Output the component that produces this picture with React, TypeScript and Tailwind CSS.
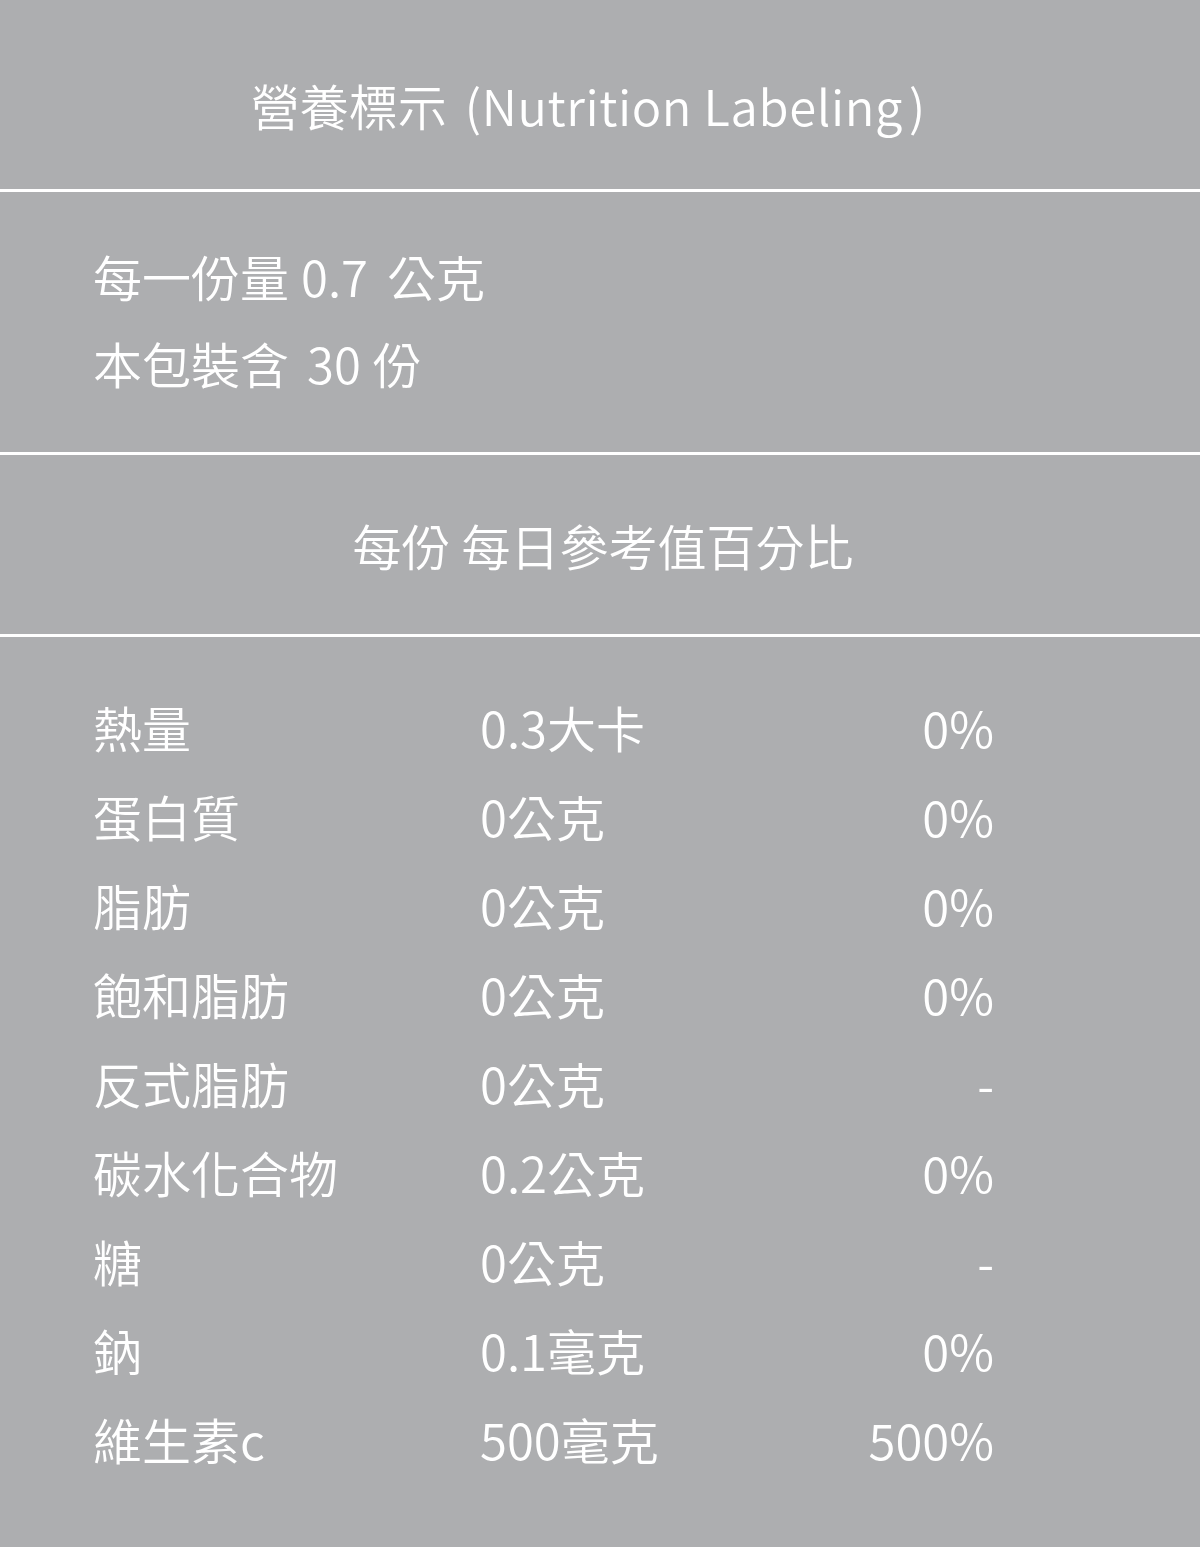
import React from "react";

const rows = [
  { name: "熱量", amount: "0.3大卡", percent: "0%" },
  { name: "蛋白質", amount: "0公克", percent: "0%" },
  { name: "脂肪", amount: "0公克", percent: "0%" },
  { name: "飽和脂肪", amount: "0公克", percent: "0%" },
  { name: "反式脂肪", amount: "0公克", percent: "-" },
  { name: "碳水化合物", amount: "0.2公克", percent: "0%" },
  { name: "糖", amount: "0公克", percent: "-" },
  { name: "鈉", amount: "0.1毫克", percent: "0%" },
  { name: "維生素c", amount: "500毫克", percent: "500%" },
];

const font = {
  fontFamily: '"Noto Sans CJK TC", "Noto Sans", sans-serif',
};

export default function App() {
  return (
    <div
      className="w-[1200px] h-[1547px] bg-[#adaeb0] text-white text-[49px] font-[350]"
      style={font}
    >
      <div className="h-[189px] pt-[75px] pr-[24px] flex justify-center leading-[60px]">
        <span>營養標示</span>
        <span className="ml-[18px] tracking-[0.6px]">(Nutrition Labeling</span>
        <span className="ml-[6px]">)</span>
      </div>
      <div className="h-[3px] bg-white" />

      <div className="h-[260px] pt-[40px] pl-[93px] leading-[87px]">
        <div>
          每一份量<span className="ml-[12px]">0.7</span>
          <span className="ml-[19px]">公克</span>
        </div>
        <div>
          本包裝含<span className="ml-[18px]">30</span>
          <span className="ml-[12px]">份</span>
        </div>
      </div>
      <div className="h-[3px] bg-white" />

      <div className="h-[179px] pt-[60px] pl-[6px] text-center leading-[60px]">
        每份 每日參考值百分比
      </div>
      <div className="h-[3px] bg-white" />

      <div className="pt-[45px] pl-[93px] pr-[206px]">
        {rows.map((row) => (
          <div key={row.name} className="flex h-[89px] items-center leading-[89px]">
            <div className="w-[387px]">{row.name}</div>
            <div className="flex-1">{row.amount}</div>
            <div className="text-right">{row.percent}</div>
          </div>
        ))}
      </div>
    </div>
  );
}
